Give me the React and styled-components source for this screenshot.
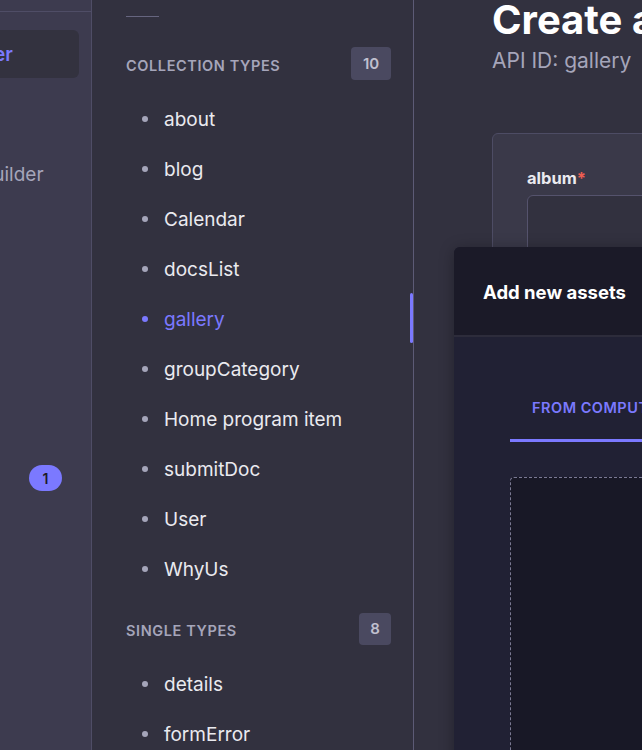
import React from "react";
import styled, { createGlobalStyle } from "styled-components";

const Global = createGlobalStyle`
  html, body { margin: 0; padding: 0; background: #32313f; }
  body { font-family: Inter, "Noto Sans", sans-serif; overflow: hidden; -webkit-font-smoothing: antialiased; }
  * { box-sizing: border-box; }
`;

const Page = styled.div`
  display: flex;
  width: 642px;
  height: 750px;
  overflow: hidden;
  background: #32313f;
`;

/* ---------- main nav (clipped on the left) ---------- */
const MainNav = styled.nav`
  flex: 0 0 92px;
  height: 100%;
  background: #3d3b4f;
  border-right: 1px solid #4f4d66;
  overflow: hidden;
  position: relative;
`;

const NavTopLine = styled.div`
  height: 1px;
  background: #4f4d66;
  margin-top: 11px;
`;

const NavList = styled.div`
  margin-left: -162px;
  width: 241px;
  display: flex;
  flex-direction: column;
  padding-top: 18px;
`;

const NavItem = styled.div`
  height: 48px;
  border-radius: 6px;
  display: flex;
  align-items: center;
  padding-left: 15px;
  margin-bottom: ${(p) => p.$gap || 0}px;
  background: ${(p) => (p.$active ? "#33323f" : "transparent")};
  color: ${(p) => (p.$active ? "#7b79ff" : "#a5a5ba")};
  font-size: 19px;
  font-weight: ${(p) => (p.$active ? 600 : 400)};
  white-space: nowrap;
`;

const NavBadge = styled.div`
  position: absolute;
  left: 29px;
  top: 465px;
  width: 33px;
  height: 26px;
  border-radius: 13px;
  background: #7b79ff;
  color: #1c1b29;
  font-size: 14px;
  font-weight: 600;
  display: flex;
  align-items: center;
  justify-content: center;
`;

/* ---------- sub nav ---------- */
const SubNav = styled.aside`
  flex: 0 0 322px;
  height: 100%;
  background: #32313f;
  border-right: 1px solid #5d5b76;
  position: relative;
  padding-left: 34px;
  padding-right: 22px;
`;

const ShortLine = styled.div`
  width: 33px;
  height: 1px;
  background: #66657f;
  margin-top: 16px;
  margin-bottom: 30px;
`;

const SectionHead = styled.div`
  display: flex;
  align-items: center;
  justify-content: space-between;
  height: 33px;
  margin-top: ${(p) => p.$top || 0}px;
  margin-bottom: 14px;
`;

const SectionTitle = styled.div`
  color: #a5a5ba;
  font-size: 14.5px;
  font-weight: 600;
  letter-spacing: 0.6px;
  text-transform: uppercase;
  padding-top: 3px;
`;

const CountBadge = styled.div`
  min-width: ${(p) => (p.$wide ? 40 : 32)}px;
  height: ${(p) => (p.$wide ? 33 : 32)}px;
  border-radius: 4px;
  background: #4a4960;
  color: #c0c0cf;
  font-size: 15px;
  font-weight: 600;
  display: flex;
  align-items: center;
  justify-content: center;
`;

const List = styled.ul`
  list-style: none;
  margin: 0;
  padding: 0;
`;

const Row = styled.li`
  height: 50px;
  display: flex;
  align-items: center;
  padding-left: 16px;
  gap: 16px;
  font-size: 19px;
  color: ${(p) => (p.$active ? "#7b79ff" : "#eaeaef")};
  white-space: nowrap;
`;

const Bullet = styled.span`
  width: 6px;
  height: 6px;
  border-radius: 50%;
  background: ${(p) => (p.$active ? "#7b79ff" : "#a5a5ba")};
  flex: none;
`;

const ActiveBar = styled.div`
  position: absolute;
  right: 0;
  top: 293px;
  width: 3px;
  height: 50px;
  border-radius: 2px;
  background: #7b79ff;
`;

/* ---------- main ---------- */
const Main = styled.main`
  flex: 1;
  position: relative;
  padding-left: 78px;
  min-width: 0;
`;

const Title = styled.h1`
  margin: -4px 0 0;
  font-size: 40px;
  line-height: 48px;
  font-weight: 700;
  color: #ffffff;
  white-space: nowrap;
`;

const Subtitle = styled.div`
  margin-top: 3px;
  font-size: 21px;
  line-height: 28px;
  color: #a5a5ba;
  white-space: nowrap;
`;

const Card = styled.section`
  margin-top: 58px;
  width: 400px;
  height: 300px;
  background: #3a3949;
  border: 1px solid #4d4c64;
  border-radius: 6px;
  padding: 33px 34px;
`;

const FieldLabel = styled.div`
  font-size: 16.5px;
  font-weight: 700;
  color: #eaeaef;
  line-height: 22px;
`;

const Star = styled.span`
  color: #ee5e52;
`;

const Input = styled.div`
  margin-top: 6px;
  height: 60px;
  border: 1px solid #55536d;
  border-radius: 6px;
  background: #32313f;
`;

const Modal = styled.div`
  position: absolute;
  left: 40px;
  top: 247px;
  width: 500px;
  height: 600px;
  border-radius: 6px 0 0 0;
  overflow: hidden;
  background: #212134;
  box-shadow: 0 2px 15px rgba(0, 0, 0, 0.3);
`;

const ModalHeader = styled.header`
  height: 90px;
  background: #1b1a28;
  border-bottom: 2px solid #2d2c3b;
  display: flex;
  align-items: center;
  padding-left: 29px;
  padding-top: 2px;
  font-size: 18.5px;
  font-weight: 700;
  color: #ffffff;
`;

const ModalBody = styled.div`
  padding: 0 0 0 56px;
`;

const Tabs = styled.div`
  display: flex;
  margin-top: 47px;
`;

const Tab = styled.div`
  padding: 15px 22px 23px;
  border-bottom: 3px solid #7b79ff;
  color: #7b79ff;
  font-size: 14.5px;
  font-weight: 600;
  letter-spacing: 0.5px;
  text-transform: uppercase;
  white-space: nowrap;
  width: 300px;
`;

const DropZone = styled.div`
  margin-top: 35px;
  height: 400px;
  background: #181826;
  border: 1px dashed #7a7993;
  border-radius: 4px;
`;

const collection = [
  "about",
  "blog",
  "Calendar",
  "docsList",
  "gallery",
  "groupCategory",
  "Home program item",
  "submitDoc",
  "User",
  "WhyUs",
];
const single = ["details", "formError"];

export default function App() {
  return (
    <>
      <Global />
      <Page>
        <MainNav>
          <NavTopLine />
          <NavList>
            <NavItem $active $gap={72}>Content Manager</NavItem>
            <NavItem>Content-Type Builder</NavItem>
          </NavList>
          <NavBadge>1</NavBadge>
        </MainNav>

        <SubNav>
          <ShortLine />
          <SectionHead>
            <SectionTitle>Collection Types</SectionTitle>
            <CountBadge $wide>10</CountBadge>
          </SectionHead>
          <List>
            {collection.map((name) => (
              <Row key={name} $active={name === "gallery"}>
                <Bullet $active={name === "gallery"} />
                {name}
              </Row>
            ))}
          </List>
          <SectionHead $top={18}>
            <SectionTitle>Single Types</SectionTitle>
            <CountBadge>8</CountBadge>
          </SectionHead>
          <List>
            {single.map((name) => (
              <Row key={name}>
                <Bullet />
                {name}
              </Row>
            ))}
          </List>
          <ActiveBar />
        </SubNav>

        <Main>
          <Title>Create an entry</Title>
          <Subtitle>API ID: gallery</Subtitle>
          <Card>
            <FieldLabel>
              album<Star>*</Star>
            </FieldLabel>
            <Input />
          </Card>
          <Modal>
            <ModalHeader>Add new assets</ModalHeader>
            <ModalBody>
              <Tabs>
                <Tab>From computer</Tab>
              </Tabs>
              <DropZone />
            </ModalBody>
          </Modal>
        </Main>
      </Page>
    </>
  );
}
